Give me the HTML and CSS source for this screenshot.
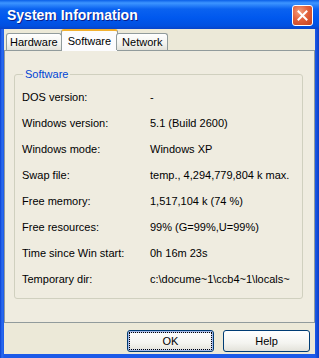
FILE: index.html
```html
<!DOCTYPE html>
<html lang="en">
<head>
    <meta charset="UTF-8">
    <title>System Information</title>
    <link rel="stylesheet" href="styles.css">
</head>
<body>
<div class="window">
    <div class="titlebar">
        <span class="title">System Information</span>
        <button class="close" aria-label="Close">
            <svg width="11" height="11" viewBox="0 0 11 11">
                <path d="M1.5 1.5 L9.5 9.5 M9.5 1.5 L1.5 9.5" stroke="#fff" stroke-width="2" stroke-linecap="square"/>
            </svg>
        </button>
    </div>
    <div class="client">
        <div class="tabs">
            <div class="tab">Hardware</div>
            <div class="tab active">Software</div>
            <div class="tab wide">Network</div>
        </div>
        <div class="panel">
            <fieldset class="group">
                <legend>Software</legend>
                <div class="row"><span class="label">DOS version:</span><span class="value">-</span></div>
                <div class="row"><span class="label">Windows version:</span><span class="value">5.1 (Build 2600)</span></div>
                <div class="row"><span class="label">Windows mode:</span><span class="value">Windows XP</span></div>
                <div class="row"><span class="label">Swap file:</span><span class="value">temp., 4,294,779,804 k max.</span></div>
                <div class="row"><span class="label">Free memory:</span><span class="value">1,517,104 k (74 %)</span></div>
                <div class="row"><span class="label">Free resources:</span><span class="value">99% (G=99%,U=99%)</span></div>
                <div class="row"><span class="label">Time since Win start:</span><span class="value">0h 16m 23s</span></div>
                <div class="row"><span class="label">Temporary dir:</span><span class="value">c:\docume~1\ccb4~1\locals~</span></div>
            </fieldset>
        </div>
        <div class="buttons">
            <button class="btn default"><span>OK</span></button>
            <button class="btn"><span>Help</span></button>
        </div>
    </div>
</div>
</body>
</html>
```

FILE: styles.css
```css
html, body {
    margin: 0;
    padding: 0;
}
body {
    font-family: "Liberation Sans", Arial, sans-serif;
    font-size: 11px;
    color: #000;
    background: #0831d9;
}
.window {
    width: 319px;
    height: 358px;
    display: flex;
    flex-direction: column;
    background: linear-gradient(to right, #0a3fd0 0, #2a6cf0 2px, #1c5ae8 4px, #1c5ae8 calc(100% - 4px), #0b3fc8 100%);
    box-sizing: border-box;
}
.titlebar {
    height: 29px;
    display: flex;
    align-items: center;
    padding: 0 6px 0 7px;
    background: linear-gradient(to bottom, #0a5fe8 0, #3d95ff 3px, #0a62f0 9px, #0058ee 18px, #0150e0 26px, #0843c8 29px);
}
.title {
    flex: 1;
    color: #fff;
    font-weight: bold;
    font-size: 14px;
    text-shadow: 1px 1px 0 #0a1e8a;
    margin-top: 1px;
}
.close {
    width: 21px;
    height: 21px;
    padding: 0;
    border: 1px solid #fff;
    border-radius: 3px;
    background: radial-gradient(circle at 35% 30%, #f3a07e 0, #e2613c 45%, #c4401d 100%);
    display: flex;
    align-items: center;
    justify-content: center;
    margin-top: 2px;
}
.client {
    flex: 1;
    margin: 0 4px 4px 4px;
    background: #ece9d8;
    display: flex;
    flex-direction: column;
}
.tabs {
    display: flex;
    align-items: flex-end;
    height: 21px;
    padding-left: 2px;
    position: relative;
    z-index: 1;
}
.tab {
    height: 17px;
    line-height: 16px;
    padding: 0 3px;
    border: 1px solid #919b9c;
    border-bottom: none;
    border-radius: 3px 3px 0 0;
    background: linear-gradient(to bottom, #fff 0, #f3f3ef 60%, #e3e2da 100%);
    box-sizing: border-box;
    font-size: 11px;
}
.tab.wide {
    padding: 0 5px;
}
.tab.active {
    height: 22px;
    line-height: 20px;
    margin-bottom: -1px;
    margin-left: -1px;
    margin-right: -1px;
    padding: 0 6px;
    background: #fcfcfe;
    border-top: 2px solid #f2b131;
}
.tab + .tab {
    margin-left: -1px;
}
.panel {
    height: 273px;
    box-sizing: border-box;
    border: 1px solid #919b9c;
    background: #efece0;
    padding: 17px 0 0 9px;
}
.group {
    width: 289px;
    height: 231px;
    box-sizing: border-box;
    margin: 0;
    padding: 4px 0 0 7px;
    border: 1px solid #d0d0bf;
    border-radius: 3px;
}
.group legend {
    color: #0046d5;
    padding: 0 2px;
    margin-left: 1px;
}
.row {
    display: flex;
    height: 26px;
    align-items: center;
}
.label {
    width: 128px;
}
.buttons {
    flex: 1;
    display: flex;
    justify-content: flex-end;
    align-items: flex-start;
    gap: 9px;
    padding: 7px 5px 0 0;
}
.btn {
    width: 87px;
    height: 22px;
    padding: 0;
    border: 1px solid #003c74;
    border-radius: 3px;
    background: linear-gradient(to bottom, #fff 0, #f4f4f0 60%, #e3e2da 100%);
    font-family: "Liberation Sans", Arial, sans-serif;
    font-size: 11px;
    color: #000;
}
.btn span {
    display: block;
    margin: 1px;
    height: 18px;
    line-height: 18px;
}
.btn.default {
    box-shadow: inset 0 0 0 1px #a4b8e8, inset 0 0 0 2px #c8d4f2;
}
.btn.default span {
    margin: 2px;
    height: 16px;
    line-height: 16px;
    outline: 1px dotted #000;
}
```
